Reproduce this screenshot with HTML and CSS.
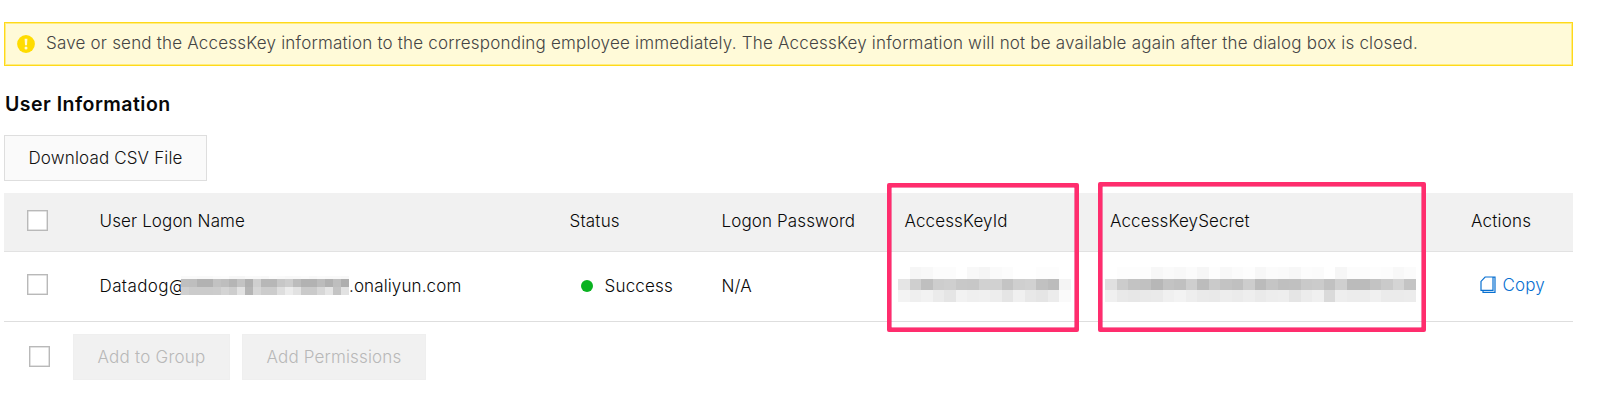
FILE: index.html
```html
<!DOCTYPE html>
<html lang="en">
<head>
<meta charset="utf-8">
<title>User Information</title>
<link rel="stylesheet" href="styles.css">
</head>
<body>
<main class="page">
  <div class="alert">
    <svg class="alert-icon" viewBox="0 0 18 18"><circle cx="9" cy="9" r="8.9" fill="#ffdc00"/><path d="M7.6 3.8h2.8l-.4 6.4H8z" fill="#fffad8"/><circle cx="9" cy="13" r="1.5" fill="#fffad8"/></svg>
    <span class="alert-text">Save or send the AccessKey information to the corresponding employee immediately. The AccessKey information will not be available again after the dialog box is closed.</span>
  </div>
  <h1 class="title"><span>User Information</span></h1>
  <button class="button download"><span>Download CSV File</span></button>
  <section class="table">
    <div class="row head">
      <span class="check"></span>
      <span class="c-name">User Logon Name</span>
      <span class="c-status">Status</span>
      <span class="c-pass">Logon Password</span>
      <span class="c-id">AccessKeyId</span>
      <span class="c-secret">AccessKeySecret</span>
      <span class="c-actions">Actions</span>
    </div>
    <div class="row body">
      <span class="check"></span>
      <span class="user"><span class="c-user">Datadog@</span><svg class="mosaic name-mosaic" width="168" height="19" data-size="8" data-y="-5.5"></svg><span class="c-domain">.onaliyun.com</span></span>
      <span class="status"><i class="dot"></i><span class="c-success">Success</span></span>
      <span class="c-na">N/A</span>
      <svg class="mosaic id-mosaic" width="196" height="35" data-size="11.5" data-y="0"></svg>
      <svg class="mosaic secret-mosaic" width="314" height="35" data-size="11.5" data-y="0"></svg>
      <a class="copy"><svg class="copy-icon" viewBox="0 0 16 18"><path d="M5.1 1H13v13.3H1V5.4z M13 1.2h2v15.2H3v-2" fill="none" stroke="#0870d1" stroke-width="1.2"/></svg><span class="c-copy">Copy</span></a>
    </div>
    <i class="mark mark-id"></i>
    <i class="mark mark-secret"></i>
  </section>
  <footer class="bulk">
    <span class="check"></span>
    <button class="button off group"><span>Add to Group</span></button>
    <button class="button off perms"><span>Add Permissions</span></button>
  </footer>
</main>
<script src="script.js"></script>
</body>
</html>
```

FILE: styles.css
```css
* { box-sizing: border-box; }
body { margin: 0; background: #fff; color: #080808; font: 300 17px/22px Inter, "Liberation Sans", sans-serif; }
.page { width: 1573px; height: 407px; padding: 22px 0 0 4px; overflow: hidden; }
.alert { display: flex; align-items: center; height: 44px; padding: 0 0 1px 12px; border: 1px solid #ffd91a; box-shadow: inset 0 0 0 1px #ffed80; background: #fffad8; color: #444; }
.alert-icon { flex: none; width: 18px; height: 18px; margin-right: 11px; }
.alert-text { margin-top: -2px; white-space: nowrap; letter-spacing: .2px; }
.title { margin: 27px 0 19px 1px; font-size: 19.5px; line-height: 23px; font-weight: 600; letter-spacing: .48px; }
.title span { display: inline-block; }
.button { display: flex; align-items: center; justify-content: center; height: 46px; padding: 0; border: 1px solid #dedede; background: #fafafa; color: #111; font: inherit; white-space: nowrap; }
.download { width: 203px; letter-spacing: .15px; }
.table { position: relative; margin-top: 12px; }
.row { display: grid; grid-template-columns: 72.5px 470px 152px 183px 205.5px 361px 1fr; align-items: center; padding-left: 23px; letter-spacing: .12px; white-space: nowrap; }
.row > * { justify-self: start; }
.head { height: 59px; padding-bottom: 2px; background: #f1f1f1; border-bottom: 1px solid #e2e2e2; }
.head .check { margin-top: -1px; }
.c-status, .c-success, .c-actions { letter-spacing: .2px; }
.body { height: 70px; padding-bottom: 2px; border-bottom: 1px solid #dedede; }
.check { flex: none; width: 21px; height: 21px; border: 1px solid #b9b9b9; box-shadow: inset 0 0 0 .5px #c5c5c5; background: #fff; }
.body .check { margin-top: -2px; }
.user, .status, .copy { display: flex; align-items: center; }
.mosaic { display: block; flex: none; overflow: visible; }
.name-mosaic { margin: -1px 0 0 0; }
.c-user { width: 81.5px; letter-spacing: .4px; }
.id-mosaic { margin-left: -6.5px; margin-top: -3px; }
.secret-mosaic { margin-left: -5.5px; margin-top: -3px; }
.dot { width: 12px; height: 12px; margin: 0 12px 0 11px; border-radius: 50%; background: #0ab221; }
.copy { margin-left: 8.5px; margin-top: -2px; color: #0870d1; }
.copy-icon { width: 16px; height: 18px; margin-right: 7px; }
.mark { position: absolute; border: 4px solid #ff2d6d; border-radius: 2px; box-shadow: inset 0 0 0 .5px #f40b5a; }
.mark-id { left: 883px; top: -10px; width: 192px; height: 149px; }
.mark-secret { left: 1094px; top: -11px; width: 328px; height: 150px; }
.bulk { display: flex; align-items: center; margin-top: 12px; padding-left: 25px; }
.bulk .check { margin: -2px 23px 0 0; }
.off { background: #f1f1f1; border-color: #efefef; color: #b8b8b8; letter-spacing: .15px; }
.group { width: 157px; margin-right: 12px; letter-spacing: .25px; }
.perms { width: 184px; }
```

FILE: script.js
```js
// Grey levels per cell, listed row by row, for each redacted value.
const values = {
  "name-mosaic": [
    [250,250,249,249,251,252,247,246,250,249,248,252,250,248,249,251,248,250,249,249,248],
    [191,190,178,178,194,190,181,195,176,207,183,183,199,205,188,178,178,188,177,190,174],
    [207,203,203,203,204,212,205,226,181,214,204,204,222,236,226,202,202,215,229,196,226]],
  "id-mosaic": [
    [255,246,248,252,252,255,248,245,250,252,255,255,253,253],
    [229,207,191,205,207,200,199,209,209,196,207,209,193,188,244],
    [243,239,242,235,229,242,239,240,237,229,240,232,229,236,250]],
  "secret-mosaic": [
    [255,253,253,253,247,250,248,251,246,253,248,251,253,247,251,250,247,252,251,255,246,252,252,253,252,248,251],
    [224,204,195,193,183,195,192,206,188,202,195,192,205,187,197,191,192,201,203,193,207,187,187,195,202,212,196],
    [240,233,231,233,234,240,243,238,234,233,237,235,238,234,237,238,229,236,240,218,238,236,236,240,235,235,236]]
};
for (const [name, rows] of Object.entries(values)) {
  const svg = document.querySelector("." + name);
  const size = Number(svg.dataset.size);
  const top = Number(svg.dataset.y);
  rows.forEach((row, y) => row.forEach((v, x) => {
    const r = document.createElementNS("http://www.w3.org/2000/svg", "rect");
    r.setAttribute("x", x * size);
    r.setAttribute("y", Math.max(0, top + y * size));
    r.setAttribute("width", size);
    r.setAttribute("height", top && y === 0 ? size + top : size);
    r.setAttribute("fill", `rgb(${v},${v},${v})`);
    r.setAttribute("shape-rendering", "crispEdges");
    svg.append(r);
  }));
}
```
